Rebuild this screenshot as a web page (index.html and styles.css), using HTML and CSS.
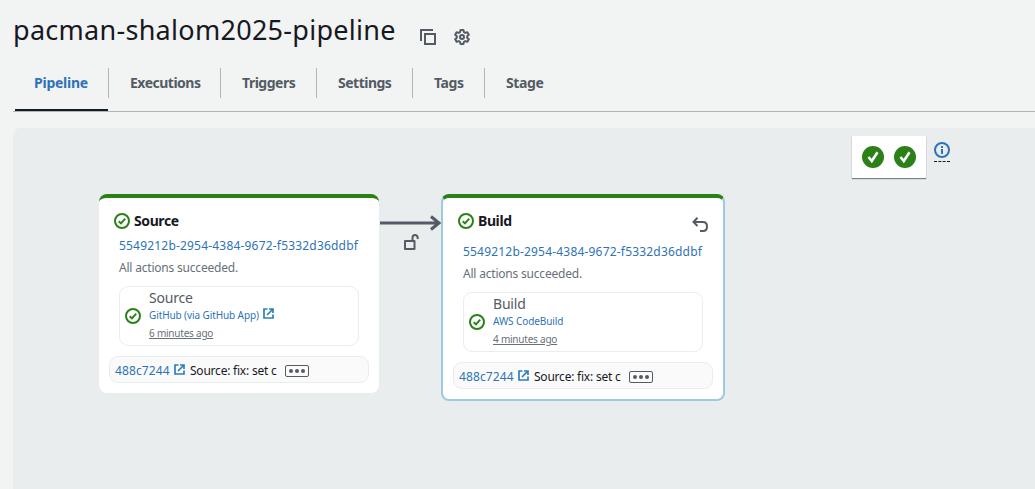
FILE: index.html
```html
<!DOCTYPE html>
<html lang="en">
<head>
<meta charset="utf-8">
<title>pacman-shalom2025-pipeline</title>
<link rel="stylesheet" href="styles.css">
</head>
<body>
<svg class="defs" aria-hidden="true">
  <symbol id="success" viewBox="0 0 16 16"><circle cx="8" cy="8" r="7" fill="none" stroke="currentColor" stroke-width="2"/><path d="M4.700 8.200 7 10.400l4.200-4.700" fill="none" stroke="currentColor" stroke-width="2"/></symbol>
  <symbol id="external" viewBox="0 0 11 11"><path d="M4.500 1H1v9h9V6.500M6 1h4v4M10 1 4 7" fill="none" stroke="currentColor" stroke-width="1.700"/></symbol>
  <symbol id="solid" viewBox="0 0 22 22"><circle cx="11" cy="11" r="11" fill="currentColor"/><path d="m6.500 11 3.300 4L15.500 6.300" fill="none" stroke="#fff" stroke-width="2.600"/></symbol>
</svg>
<header class="header">
  <h1 class="title">pacman-shalom2025-pipeline</h1>
  <svg class="icon copy" viewBox="0 0 16 16"><path d="M1 12V1h12M5 5h10v10H5z" fill="none" stroke="currentColor" stroke-width="2"/></svg>
  <svg class="icon gear" viewBox="0 0 16 16"><path d="M6.600 1h2.800l.6 2.200 1.200.7 2.200-.6 1.400 2.400L13.200 7.300v1.400l1.600 1.600-1.400 2.400-2.200-.6-1.200.7-.6 2.200H6.600L6 12.800l-1.200-.7-2.200.6-1.400-2.400 1.600-1.600V7.300L1.200 5.700l1.400-2.400 2.200.6L6 3.200z" fill="none" stroke="currentColor" stroke-width="2" stroke-linejoin="round"/><circle cx="8" cy="8" r="2" fill="none" stroke="currentColor" stroke-width="2"/></svg>
</header>
<nav class="tabs">
  <a class="tab tab-pipeline active"><span>Pipeline</span></a>
  <a class="tab tab-executions"><span>Executions</span></a>
  <a class="tab tab-triggers"><span>Triggers</span></a>
  <a class="tab tab-settings"><span>Settings</span></a>
  <a class="tab tab-tags"><span>Tags</span></a>
  <a class="tab tab-stage"><span>Stage</span></a>
</nav>
<main class="canvas">
  <div class="overview">
    <div class="minimap"><svg class="solid"><use href="#solid"/></svg><svg class="solid"><use href="#solid"/></svg></div>
    <div class="info"><svg viewBox="0 0 16 16"><circle cx="8" cy="8" r="7" fill="none" stroke="currentColor" stroke-width="2"/><path d="M8 4v2M8 7v5" stroke="currentColor" stroke-width="2"/></svg></div>
  </div>
  <section class="stage source">
    <div class="stage-head"><svg class="check"><use href="#success"/></svg><h2>Source</h2></div>
    <a class="execution">5549212b-2954-4384-9672-f5332d36ddbf</a>
    <p class="status">All actions succeeded.</p>
    <div class="action">
      <svg class="check"><use href="#success"/></svg>
      <div class="action-body">
        <h3>Source</h3>
        <div class="provider"><a>GitHub (via GitHub App)</a><svg class="ext"><use href="#external"/></svg></div>
        <div class="time"><span>6 minutes ago</span></div>
      </div>
    </div>
    <div class="commit"><a>488c7244</a><svg class="ext"><use href="#external"/></svg><span class="message">Source: fix: set c</span><span class="more"><i></i><i></i><i></i></span></div>
  </section>
  <div class="transition">
    <svg class="arrow" viewBox="0 0 62 16"><path d="M0 8h59M51 1.500 59 8l-8 6.500" fill="none" stroke="currentColor" stroke-width="3"/></svg>
    <svg class="lock" viewBox="0 0 16 17"><path d="M2 7h9.500v8H2zM9.500 7V3.800Q9.500 1 12 1t2.700 2.800V5" fill="none" stroke="currentColor" stroke-width="2" stroke-linejoin="round"/></svg>
  </div>
  <section class="stage build">
    <div class="stage-head"><svg class="check"><use href="#success"/></svg><h2>Build</h2><svg class="undo" viewBox="0 0 16 16"><path d="M5.500.8 1.500 5l4 4M1.500 5H11q4 0 4 4.500T11 14H8" fill="none" stroke="currentColor" stroke-width="2"/></svg></div>
    <a class="execution">5549212b-2954-4384-9672-f5332d36ddbf</a>
    <p class="status">All actions succeeded.</p>
    <div class="action">
      <svg class="check"><use href="#success"/></svg>
      <div class="action-body">
        <h3>Build</h3>
        <div class="provider"><a>AWS CodeBuild</a></div>
        <div class="time"><span>4 minutes ago</span></div>
      </div>
    </div>
    <div class="commit"><a>488c7244</a><svg class="ext"><use href="#external"/></svg><span class="message">Source: fix: set c</span><span class="more"><i></i><i></i><i></i></span></div>
  </section>
</main>
</body>
</html>
```
FILE: styles.css
```css
* { box-sizing: border-box; }
body { margin: 0; height: 489px; overflow: hidden; display: flex; flex-direction: column; background: #f2f3f3; color: #16191f; font-family: "Noto Sans", sans-serif; white-space: nowrap; }
h1, h2, h3, p { margin: 0; font-weight: 400; }
svg { display: block; flex: none; }
.defs { display: none; }
.header { display: flex; height: 68px; padding-left: 13px; color: #545b64; }
.title { width: 407px; color: #16191f; font-size: 27px; line-height: 36px; padding-top: 12px; letter-spacing: 0.28px; }
.icon { width: 16px; height: 16px; margin-top: 29px; }
.gear { margin-left: 18px; }
.tabs { display: flex; height: 44px; margin-left: 13px; padding-left: 2px; border-bottom: 1px solid #aab7b8; flex: none; }
.tab { position: relative; height: 30px; padding-left: 21px; border-right: 1px solid #aab7b8; font-size: 14px; font-weight: 700; line-height: 30px; color: #545b64; letter-spacing: -0.5px; }
.tab-pipeline { width: 94px; padding-left: 19px; letter-spacing: -0.25px; }
.tab-executions { width: 112px; }
.tab-triggers, .tab-settings { width: 96px; }
.tab-tags { width: 72px; letter-spacing: -0.4px; }
.tab-stage { border: 0; letter-spacing: -0.4px; }
.active { color: #2e73b8; }
.active::after { content: ""; position: absolute; left: 0; top: 41px; width: 93px; height: 2px; background: #16191f; }
.canvas { position: relative; flex: 1; margin: 16px 0 0 13px; background: #e9eded; border-radius: 8px 0 0 0; }
.overview { position: absolute; left: 839px; top: 8px; display: flex; gap: 8px; }
.minimap { display: flex; gap: 10px; width: 74px; height: 42px; padding: 10px; background: #fff; box-shadow: 0 1px 1px rgba(0,28,36,.5); }
.solid { width: 22px; height: 22px; color: #2b8018; }
.info { height: 26px; padding-top: 6px; border-bottom: 1px dashed #16191f; color: #2e73b8; }
.info svg { width: 16px; height: 16px; }
.stage { position: absolute; top: 66px; width: 280px; background: #fff; border-top: 4px solid #2b8018; border-radius: 8px; }
.source { left: 86px; height: 199px; }
.build { left: 428px; width: 284px; height: 207px; border: 2px solid #9ecae1; border-top: 4px solid #2b8018; }
.stage-head { display: flex; align-items: center; height: 38px; padding: 8px 15px 0; }
.build .stage-head { height: 44px; padding-bottom: 6px; }
.check { width: 16px; height: 16px; color: #2b8018; }
h2 { margin-left: 4px; font-size: 14px; font-weight: 700; line-height: 20px; letter-spacing: -0.4px; }
.undo { width: 16px; height: 16px; margin: 8px 0 0 auto; color: #545b64; }
.execution { display: block; height: 20px; margin-left: 20px; color: #2e73b8; font-size: 12px; line-height: 20px; letter-spacing: 0.19px; }
.status { height: 20px; margin: 2px 0 0 20px; color: #687078; font-size: 12px; line-height: 20px; letter-spacing: -0.2px; }
.action { display: flex; width: 240px; height: 60px; margin: 8px 0 0 20px; padding-left: 5px; border: 1px solid #eaeded; border-radius: 9px; }
.action .check { margin-top: 21px; }
.action-body { padding: 1px 0 0 8px; }
h3 { color: #545b64; font-size: 14px; line-height: 20px; letter-spacing: -0.2px; }
.provider { display: flex; height: 17px; color: #2e73b8; font-size: 10px; line-height: 15px; letter-spacing: -0.1px; }
.ext { width: 11px; height: 11px; margin-left: 4px; color: #2e7fb8; }
.time { color: #687078; font-size: 10px; line-height: 17px; letter-spacing: -0.22px; text-decoration: underline; text-underline-offset: 1px; }
.commit { display: flex; align-items: center; width: 260px; height: 27px; margin: 10px 0 0 10px; padding-left: 5px; border: 1px solid #eaeded; border-radius: 9px; background: #fafafa; font-size: 12px; line-height: 16px; }
.commit a { width: 55px; padding-top: 2px; color: #2e73b8; letter-spacing: 0.13px; }
.commit .message { width: 95px; margin-left: 5px; padding-top: 2px; letter-spacing: -0.22px; }
.more { display: flex; align-items: center; justify-content: center; gap: 2px; width: 24px; height: 12px; margin-top: 3px; border: 1px solid #545b64; border-radius: 2px; }
.more i { width: 4px; height: 4px; border-radius: 50%; background: #545b64; }
.transition { position: absolute; left: 367px; top: 87px; width: 62px; color: #545b64; }
.arrow { width: 62px; height: 16px; }
.lock { width: 16px; height: 17px; margin: 3px 0 0 23px; }
```
